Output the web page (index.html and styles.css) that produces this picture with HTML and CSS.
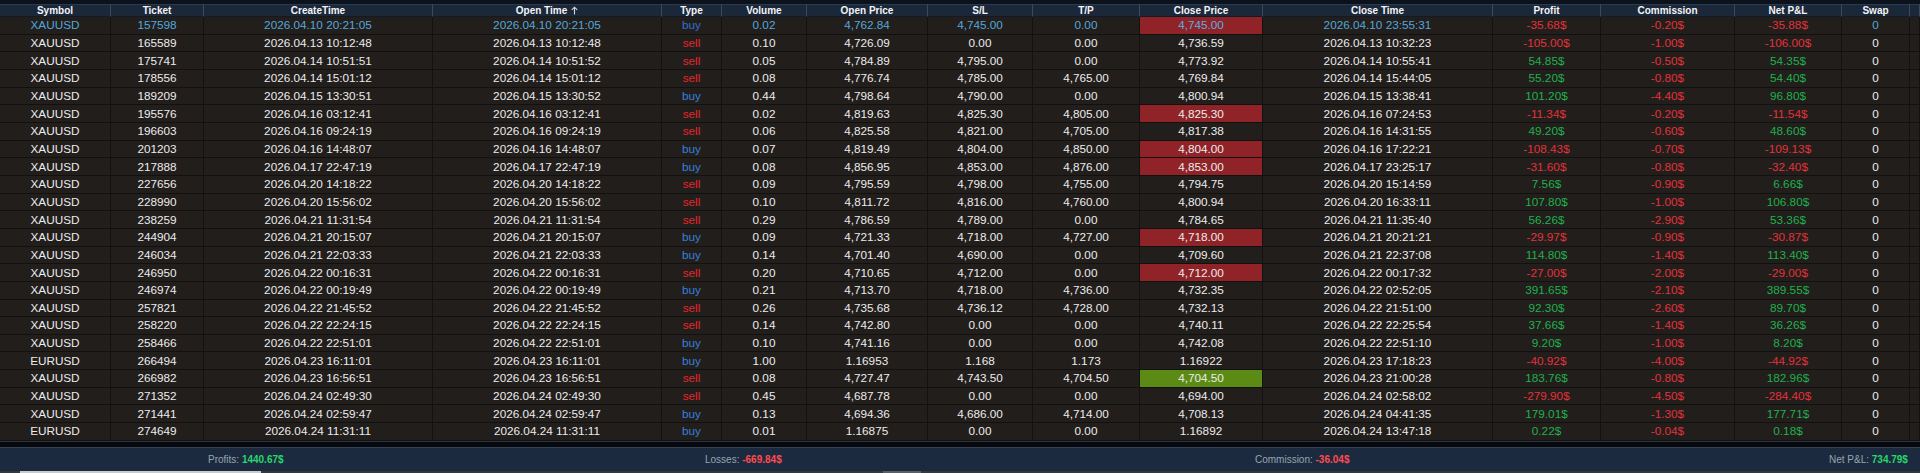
FILE: index.html
```html
<!DOCTYPE html>
<html lang="en">
<head>
<meta charset="utf-8">
<title>Trade History</title>
<link rel="stylesheet" href="styles.css">
</head>
<body>
<div class="app">
  <div class="topstrip"></div>
  <div class="grid">
    <div class="row head">
      <div class="c">Symbol</div><div class="c">Ticket</div><div class="c">CreateTime</div>
      <div class="c">Open Time<svg class="sort" width="7" height="9" viewBox="0 0 7 9"><path d="M3.5 8.5V1.2M0.8 3.9L3.5 1.2L6.2 3.9" fill="none" stroke="#d4d8de" stroke-width="1.1"/></svg></div>
      <div class="c">Type</div><div class="c">Volume</div><div class="c">Open Price</div><div class="c">S/L</div><div class="c">T/P</div><div class="c">Close Price</div><div class="c">Close Time</div><div class="c">Profit</div><div class="c">Commission</div><div class="c">Net P&amp;L</div><div class="c">Swap</div><div class="c"></div>
    </div>
    <div class="row sel"><div class="c">XAUUSD</div><div class="c">157598</div><div class="c">2026.04.10 20:21:05</div><div class="c">2026.04.10 20:21:05</div><div class="c buy">buy</div><div class="c">0.02</div><div class="c">4,762.84</div><div class="c">4,745.00</div><div class="c">0.00</div><div class="c hl-red">4,745.00</div><div class="c">2026.04.10 23:55:31</div><div class="c neg">-35.68$</div><div class="c neg">-0.20$</div><div class="c neg">-35.88$</div><div class="c">0</div><div class="c"></div></div>
    <div class="row"><div class="c">XAUUSD</div><div class="c">165589</div><div class="c">2026.04.13 10:12:48</div><div class="c">2026.04.13 10:12:48</div><div class="c sell">sell</div><div class="c">0.10</div><div class="c">4,726.09</div><div class="c">0.00</div><div class="c">0.00</div><div class="c">4,736.59</div><div class="c">2026.04.13 10:32:23</div><div class="c neg">-105.00$</div><div class="c neg">-1.00$</div><div class="c neg">-106.00$</div><div class="c">0</div><div class="c"></div></div>
    <div class="row"><div class="c">XAUUSD</div><div class="c">175741</div><div class="c">2026.04.14 10:51:51</div><div class="c">2026.04.14 10:51:52</div><div class="c sell">sell</div><div class="c">0.05</div><div class="c">4,784.89</div><div class="c">4,795.00</div><div class="c">0.00</div><div class="c">4,773.92</div><div class="c">2026.04.14 10:55:41</div><div class="c pos">54.85$</div><div class="c neg">-0.50$</div><div class="c pos">54.35$</div><div class="c">0</div><div class="c"></div></div>
    <div class="row"><div class="c">XAUUSD</div><div class="c">178556</div><div class="c">2026.04.14 15:01:12</div><div class="c">2026.04.14 15:01:12</div><div class="c sell">sell</div><div class="c">0.08</div><div class="c">4,776.74</div><div class="c">4,785.00</div><div class="c">4,765.00</div><div class="c">4,769.84</div><div class="c">2026.04.14 15:44:05</div><div class="c pos">55.20$</div><div class="c neg">-0.80$</div><div class="c pos">54.40$</div><div class="c">0</div><div class="c"></div></div>
    <div class="row"><div class="c">XAUUSD</div><div class="c">189209</div><div class="c">2026.04.15 13:30:51</div><div class="c">2026.04.15 13:30:52</div><div class="c buy">buy</div><div class="c">0.44</div><div class="c">4,798.64</div><div class="c">4,790.00</div><div class="c">0.00</div><div class="c">4,800.94</div><div class="c">2026.04.15 13:38:41</div><div class="c pos">101.20$</div><div class="c neg">-4.40$</div><div class="c pos">96.80$</div><div class="c">0</div><div class="c"></div></div>
    <div class="row"><div class="c">XAUUSD</div><div class="c">195576</div><div class="c">2026.04.16 03:12:41</div><div class="c">2026.04.16 03:12:41</div><div class="c sell">sell</div><div class="c">0.02</div><div class="c">4,819.63</div><div class="c">4,825.30</div><div class="c">4,805.00</div><div class="c hl-red">4,825.30</div><div class="c">2026.04.16 07:24:53</div><div class="c neg">-11.34$</div><div class="c neg">-0.20$</div><div class="c neg">-11.54$</div><div class="c">0</div><div class="c"></div></div>
    <div class="row"><div class="c">XAUUSD</div><div class="c">196603</div><div class="c">2026.04.16 09:24:19</div><div class="c">2026.04.16 09:24:19</div><div class="c sell">sell</div><div class="c">0.06</div><div class="c">4,825.58</div><div class="c">4,821.00</div><div class="c">4,705.00</div><div class="c">4,817.38</div><div class="c">2026.04.16 14:31:55</div><div class="c pos">49.20$</div><div class="c neg">-0.60$</div><div class="c pos">48.60$</div><div class="c">0</div><div class="c"></div></div>
    <div class="row"><div class="c">XAUUSD</div><div class="c">201203</div><div class="c">2026.04.16 14:48:07</div><div class="c">2026.04.16 14:48:07</div><div class="c buy">buy</div><div class="c">0.07</div><div class="c">4,819.49</div><div class="c">4,804.00</div><div class="c">4,850.00</div><div class="c hl-red">4,804.00</div><div class="c">2026.04.16 17:22:21</div><div class="c neg">-108.43$</div><div class="c neg">-0.70$</div><div class="c neg">-109.13$</div><div class="c">0</div><div class="c"></div></div>
    <div class="row"><div class="c">XAUUSD</div><div class="c">217888</div><div class="c">2026.04.17 22:47:19</div><div class="c">2026.04.17 22:47:19</div><div class="c buy">buy</div><div class="c">0.08</div><div class="c">4,856.95</div><div class="c">4,853.00</div><div class="c">4,876.00</div><div class="c hl-red">4,853.00</div><div class="c">2026.04.17 23:25:17</div><div class="c neg">-31.60$</div><div class="c neg">-0.80$</div><div class="c neg">-32.40$</div><div class="c">0</div><div class="c"></div></div>
    <div class="row"><div class="c">XAUUSD</div><div class="c">227656</div><div class="c">2026.04.20 14:18:22</div><div class="c">2026.04.20 14:18:22</div><div class="c sell">sell</div><div class="c">0.09</div><div class="c">4,795.59</div><div class="c">4,798.00</div><div class="c">4,755.00</div><div class="c">4,794.75</div><div class="c">2026.04.20 15:14:59</div><div class="c pos">7.56$</div><div class="c neg">-0.90$</div><div class="c pos">6.66$</div><div class="c">0</div><div class="c"></div></div>
    <div class="row"><div class="c">XAUUSD</div><div class="c">228990</div><div class="c">2026.04.20 15:56:02</div><div class="c">2026.04.20 15:56:02</div><div class="c sell">sell</div><div class="c">0.10</div><div class="c">4,811.72</div><div class="c">4,816.00</div><div class="c">4,760.00</div><div class="c">4,800.94</div><div class="c">2026.04.20 16:33:11</div><div class="c pos">107.80$</div><div class="c neg">-1.00$</div><div class="c pos">106.80$</div><div class="c">0</div><div class="c"></div></div>
    <div class="row"><div class="c">XAUUSD</div><div class="c">238259</div><div class="c">2026.04.21 11:31:54</div><div class="c">2026.04.21 11:31:54</div><div class="c sell">sell</div><div class="c">0.29</div><div class="c">4,786.59</div><div class="c">4,789.00</div><div class="c">0.00</div><div class="c">4,784.65</div><div class="c">2026.04.21 11:35:40</div><div class="c pos">56.26$</div><div class="c neg">-2.90$</div><div class="c pos">53.36$</div><div class="c">0</div><div class="c"></div></div>
    <div class="row"><div class="c">XAUUSD</div><div class="c">244904</div><div class="c">2026.04.21 20:15:07</div><div class="c">2026.04.21 20:15:07</div><div class="c buy">buy</div><div class="c">0.09</div><div class="c">4,721.33</div><div class="c">4,718.00</div><div class="c">4,727.00</div><div class="c hl-red">4,718.00</div><div class="c">2026.04.21 20:21:21</div><div class="c neg">-29.97$</div><div class="c neg">-0.90$</div><div class="c neg">-30.87$</div><div class="c">0</div><div class="c"></div></div>
    <div class="row"><div class="c">XAUUSD</div><div class="c">246034</div><div class="c">2026.04.21 22:03:33</div><div class="c">2026.04.21 22:03:33</div><div class="c buy">buy</div><div class="c">0.14</div><div class="c">4,701.40</div><div class="c">4,690.00</div><div class="c">0.00</div><div class="c">4,709.60</div><div class="c">2026.04.21 22:37:08</div><div class="c pos">114.80$</div><div class="c neg">-1.40$</div><div class="c pos">113.40$</div><div class="c">0</div><div class="c"></div></div>
    <div class="row"><div class="c">XAUUSD</div><div class="c">246950</div><div class="c">2026.04.22 00:16:31</div><div class="c">2026.04.22 00:16:31</div><div class="c sell">sell</div><div class="c">0.20</div><div class="c">4,710.65</div><div class="c">4,712.00</div><div class="c">0.00</div><div class="c hl-red">4,712.00</div><div class="c">2026.04.22 00:17:32</div><div class="c neg">-27.00$</div><div class="c neg">-2.00$</div><div class="c neg">-29.00$</div><div class="c">0</div><div class="c"></div></div>
    <div class="row"><div class="c">XAUUSD</div><div class="c">246974</div><div class="c">2026.04.22 00:19:49</div><div class="c">2026.04.22 00:19:49</div><div class="c buy">buy</div><div class="c">0.21</div><div class="c">4,713.70</div><div class="c">4,718.00</div><div class="c">4,736.00</div><div class="c">4,732.35</div><div class="c">2026.04.22 02:52:05</div><div class="c pos">391.65$</div><div class="c neg">-2.10$</div><div class="c pos">389.55$</div><div class="c">0</div><div class="c"></div></div>
    <div class="row"><div class="c">XAUUSD</div><div class="c">257821</div><div class="c">2026.04.22 21:45:52</div><div class="c">2026.04.22 21:45:52</div><div class="c sell">sell</div><div class="c">0.26</div><div class="c">4,735.68</div><div class="c">4,736.12</div><div class="c">4,728.00</div><div class="c">4,732.13</div><div class="c">2026.04.22 21:51:00</div><div class="c pos">92.30$</div><div class="c neg">-2.60$</div><div class="c pos">89.70$</div><div class="c">0</div><div class="c"></div></div>
    <div class="row"><div class="c">XAUUSD</div><div class="c">258220</div><div class="c">2026.04.22 22:24:15</div><div class="c">2026.04.22 22:24:15</div><div class="c sell">sell</div><div class="c">0.14</div><div class="c">4,742.80</div><div class="c">0.00</div><div class="c">0.00</div><div class="c">4,740.11</div><div class="c">2026.04.22 22:25:54</div><div class="c pos">37.66$</div><div class="c neg">-1.40$</div><div class="c pos">36.26$</div><div class="c">0</div><div class="c"></div></div>
    <div class="row"><div class="c">XAUUSD</div><div class="c">258466</div><div class="c">2026.04.22 22:51:01</div><div class="c">2026.04.22 22:51:01</div><div class="c buy">buy</div><div class="c">0.10</div><div class="c">4,741.16</div><div class="c">0.00</div><div class="c">0.00</div><div class="c">4,742.08</div><div class="c">2026.04.22 22:51:10</div><div class="c pos">9.20$</div><div class="c neg">-1.00$</div><div class="c pos">8.20$</div><div class="c">0</div><div class="c"></div></div>
    <div class="row"><div class="c">EURUSD</div><div class="c">266494</div><div class="c">2026.04.23 16:11:01</div><div class="c">2026.04.23 16:11:01</div><div class="c buy">buy</div><div class="c">1.00</div><div class="c">1.16953</div><div class="c">1.168</div><div class="c">1.173</div><div class="c">1.16922</div><div class="c">2026.04.23 17:18:23</div><div class="c neg">-40.92$</div><div class="c neg">-4.00$</div><div class="c neg">-44.92$</div><div class="c">0</div><div class="c"></div></div>
    <div class="row"><div class="c">XAUUSD</div><div class="c">266982</div><div class="c">2026.04.23 16:56:51</div><div class="c">2026.04.23 16:56:51</div><div class="c sell">sell</div><div class="c">0.08</div><div class="c">4,727.47</div><div class="c">4,743.50</div><div class="c">4,704.50</div><div class="c hl-green">4,704.50</div><div class="c">2026.04.23 21:00:28</div><div class="c pos">183.76$</div><div class="c neg">-0.80$</div><div class="c pos">182.96$</div><div class="c">0</div><div class="c"></div></div>
    <div class="row"><div class="c">XAUUSD</div><div class="c">271352</div><div class="c">2026.04.24 02:49:30</div><div class="c">2026.04.24 02:49:30</div><div class="c sell">sell</div><div class="c">0.45</div><div class="c">4,687.78</div><div class="c">0.00</div><div class="c">0.00</div><div class="c">4,694.00</div><div class="c">2026.04.24 02:58:02</div><div class="c neg">-279.90$</div><div class="c neg">-4.50$</div><div class="c neg">-284.40$</div><div class="c">0</div><div class="c"></div></div>
    <div class="row"><div class="c">XAUUSD</div><div class="c">271441</div><div class="c">2026.04.24 02:59:47</div><div class="c">2026.04.24 02:59:47</div><div class="c buy">buy</div><div class="c">0.13</div><div class="c">4,694.36</div><div class="c">4,686.00</div><div class="c">4,714.00</div><div class="c">4,708.13</div><div class="c">2026.04.24 04:41:35</div><div class="c pos">179.01$</div><div class="c neg">-1.30$</div><div class="c pos">177.71$</div><div class="c">0</div><div class="c"></div></div>
    <div class="row"><div class="c">EURUSD</div><div class="c">274649</div><div class="c">2026.04.24 11:31:11</div><div class="c">2026.04.24 11:31:11</div><div class="c buy">buy</div><div class="c">0.01</div><div class="c">1.16875</div><div class="c">0.00</div><div class="c">0.00</div><div class="c">1.16892</div><div class="c">2026.04.24 13:47:18</div><div class="c pos">0.22$</div><div class="c neg">-0.04$</div><div class="c pos">0.18$</div><div class="c">0</div><div class="c"></div></div>
  </div>
  <div class="band"></div>
  <div class="footer">
    <div class="stat"><span class="lbl">Profits:</span> <b class="gval">1440.67$</b></div>
    <div class="stat"><span class="lbl">Losses:</span> <b class="rval">-669.84$</b></div>
    <div class="stat"><span class="lbl">Commission:</span> <b class="rval">-36.04$</b></div>
    <div class="stat"><span class="lbl">Net P&amp;L:</span> <b class="gval">734.79$</b></div>
  </div>
  <div class="bottomstrip"><div class="tab tab1"></div><div class="tab tab2"></div></div>
</div>
</body>
</html>
```
FILE: styles.css
```css
* { box-sizing: border-box; }
html, body { margin: 0; padding: 0; background: #0b1019; }
body { width: 1920px; height: 473px; overflow: hidden; font-family: "Liberation Sans", Arial, sans-serif; }
.app { width: 1920px; height: 473px; display: flex; flex-direction: column; }
.topstrip { height: 4px; background: #0c121c; }
.grid { display: flex; flex-direction: column; background: #221e1c; border-bottom: 1px solid #2a3444; }
.row {
  display: grid;
  grid-template-columns: 111px 93px 229px 229px 60px 85px 121px 105px 107px 123px 230px 108px 134px 107px 68px 1fr;
  height: 17.667px;
}
.row .c {
  display: flex; align-items: center; justify-content: center;
  border-right: 1px solid #131211; border-bottom: 1px solid #121110;
  color: #ececec; font-size: 11.75px; white-space: nowrap; padding-bottom: 1px;
}
.row.head { height: 13px; background: #1b283a; box-shadow: inset 0 1px 0 #2a3a51; }
.row.head .c {
  color: #f2f4f7; font-weight: bold; font-size: 10px; border-right: 1px solid #3b495d; border-bottom: 1px solid #121a26; padding-bottom: 0;
}
.sort { margin-left: 4px; }
.row.sel .c { color: #52a8dc; }
.row .c.buy { color: #3580dc; }
.row.sel .c.buy { color: #2f70d2; }
.row .c.sell { color: #e2272d; }
.row .c.pos { color: #20b04c; }
.row .c.neg { color: #e2323a; }
.row .c.hl-red { background: #902327; }
.row.sel .c.hl-red { color: #5aaee0; }
.row .c.hl-green { background: #5b8b14; }
.band { height: 5px; background: #07090d; }
.footer {
  height: 24px; background: #1b2a3e; border-top: 1px solid #33435a;
  display: grid; grid-template-columns: 496.5px 550.5px 574px 1fr; padding-left: 208px; align-items: center;
}
.stat { font-size: 10.7px; white-space: nowrap; transform: scaleX(0.935); transform-origin: left center; padding-bottom: 1px; }
.lbl { color: #9aa4b0; }
.gval { color: #28d66c; }
.rval { color: #ff4a52; }
.bottomstrip { flex: 1; background: #34393f; display: flex; }
.tab { height: 100%; }
.tab1 { margin-left: 20px; width: 241px; background: #c9cbce; }
.tab2 { margin-left: 622px; width: 38px; background: #5a5f66; }
```
